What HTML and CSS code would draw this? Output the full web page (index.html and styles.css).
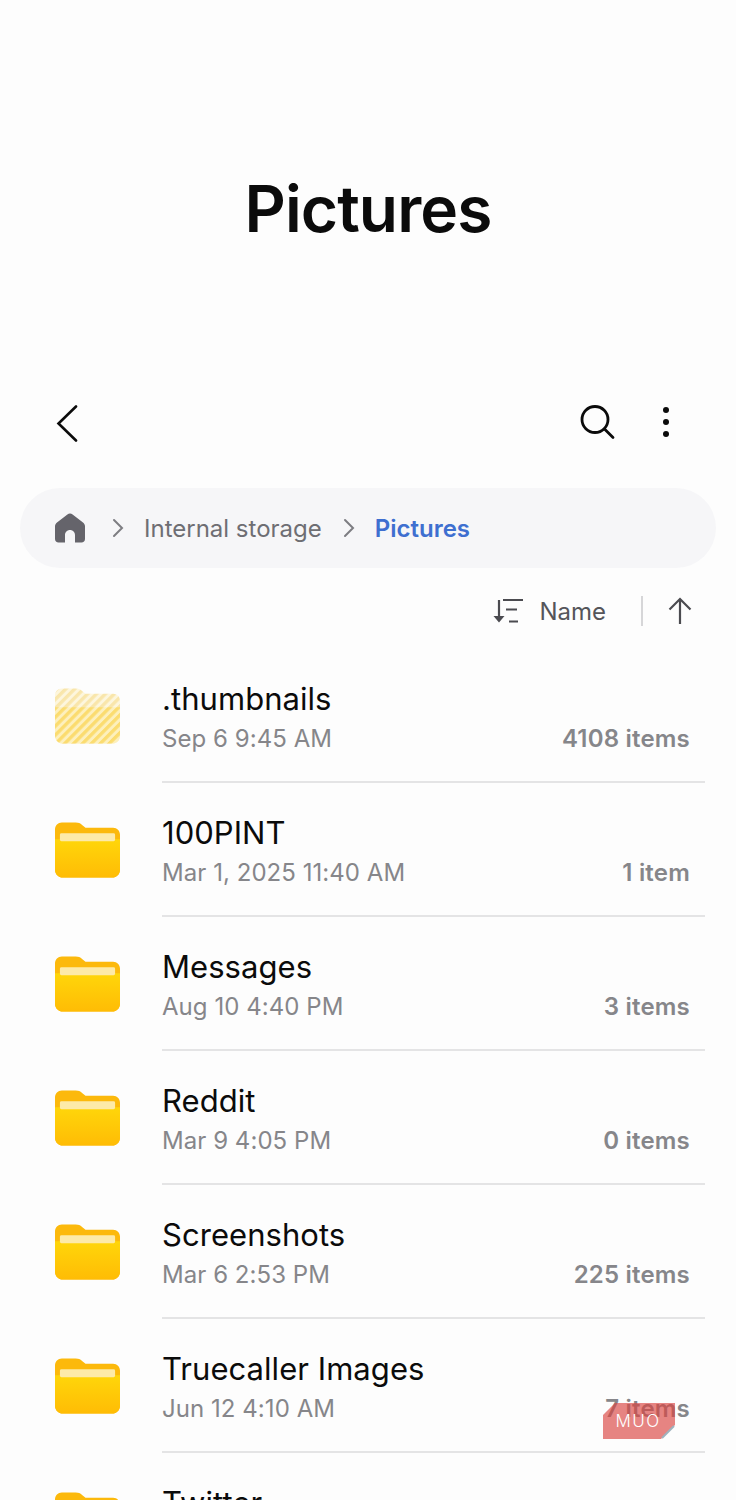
FILE: index.html
```html
<!doctype html>
<html lang="en">
  <head>
    <meta charset="utf-8">
    <title>Pictures</title>
    <meta name="viewport" content="width=device-width, initial-scale=1.0">
    <link rel="stylesheet" href="styles.css">
  </head>
  <body>
    <svg class="defs" width="0" height="0" aria-hidden="true">
      <defs>
        <linearGradient id="folder-front" x1="0" y1="0" x2="0" y2="1">
          <stop offset="0" stop-color="#ffd60a"/>
          <stop offset="1" stop-color="#ffbc05"/>
        </linearGradient>
        <pattern id="stripes" width="6.400" height="6.400" patternUnits="userSpaceOnUse" patternTransform="rotate(45)">
          <rect width="6.400" height="6.400" fill="#fdf0bd"/>
          <rect width="3.400" height="6.400" fill="#fbdc70"/>
        </pattern>
        <pattern id="stripes-pale" width="6.400" height="6.400" patternUnits="userSpaceOnUse" patternTransform="rotate(45)">
          <rect width="6.400" height="6.400" fill="#fdf6dd"/>
          <rect width="3.400" height="6.400" fill="#f9e6ab"/>
        </pattern>
        <symbol id="folder" viewBox="0 0 66 56">
          <path d="M7 0h14c3 0 4.500 .8 6.500 2.500L31 5.500h28c4 0 7 3 7 7V48c0 4.500-3.500 8-8 8H8c-4.500 0-8-3.500-8-8V7c0-4 3-7 7-7z" fill="#fcb90c"/>
          <path d="M0 17h66v31c0 4.500-3.500 8-8 8H8c-4.500 0-8-3.500-8-8z" fill="url(#folder-front)"/>
          <rect x="5" y="11" width="56" height="8" rx="1.500" fill="#fdeaa8"/>
        </symbol>
        <symbol id="folder-hidden" viewBox="0 0 66 56">
          <path d="M7 0h14c3 0 4.500 .8 6.500 2.500L31 5.500h28c4 0 7 3 7 7V48c0 4.500-3.500 8-8 8H8c-4.500 0-8-3.500-8-8V7c0-4 3-7 7-7z" fill="url(#stripes-pale)"/>
          <path d="M0 19h66v29c0 4.500-3.500 8-8 8H8c-4.500 0-8-3.500-8-8z" fill="url(#stripes)"/>
        </symbol>
      </defs>
    </svg>

    <div class="page">
      <header class="title-area">
        <h1>Pictures</h1>
      </header>

      <nav class="toolbar">
        <svg class="icon-back" viewBox="0 0 24 38" width="24" height="38"><path d="M21 2.500 3.500 19.500 21 36.500" fill="none" stroke="#0b0b0b" stroke-width="2.600" stroke-linecap="round"/></svg>
        <div class="toolbar-actions">
          <svg viewBox="0 0 36 36" width="36" height="36"><circle cx="16" cy="15.500" r="13" fill="none" stroke="#0b0b0b" stroke-width="2.800"/><path d="m25.500 25 8.500 8.500" fill="none" stroke="#0b0b0b" stroke-width="2.800" stroke-linecap="round"/></svg>
          <div class="more-dots"><span></span><span></span><span></span></div>
        </div>
      </nav>

      <div class="breadcrumb">
        <svg class="icon-home" viewBox="0 0 30 30" width="30" height="30"><path d="M15 0.500c1 0 1.800.4 2.600 1L28 9.500c1.200 1 2 2.300 2 3.800V26c0 2-1.500 3.500-3.500 3.500H20V22c0-2.800-2.200-5-5-5s-5 2.200-5 5v7.500H3.500C1.500 29.500 0 28 0 26V13.300c0-1.500.8-2.800 2-3.800L12.400 1.500c.8-.6 1.600-1 2.600-1z" fill="#65646b"/></svg>
        <svg class="icon-crumb" viewBox="0 0 12 20" width="12" height="20"><path d="m2 2 8 8-8 8" fill="none" stroke="#7d7d82" stroke-width="2" stroke-linecap="round"/></svg>
        <span class="crumb">Internal storage</span>
        <svg class="icon-crumb" viewBox="0 0 12 20" width="12" height="20"><path d="m2 2 8 8-8 8" fill="none" stroke="#7d7d82" stroke-width="2" stroke-linecap="round"/></svg>
        <span class="crumb crumb-current">Pictures</span>
      </div>

      <div class="sort-bar">
        <svg viewBox="0 0 32 26" width="32" height="26"><path d="M7 2v21" fill="none" stroke="#4b4b50" stroke-width="2.200"/><path d="M1.500 18h11L7 24.500z" fill="#4b4b50"/><path d="M11 2h20M14 11.500h11M17 23.500h9" fill="none" stroke="#4b4b50" stroke-width="2.200"/></svg>
        <span class="sort-name">Name</span>
        <span class="sort-sep"></span>
        <svg viewBox="0 0 24 28" width="24" height="28"><path d="M12 27V2M1.500 12.500 12 2l10.500 10.500" fill="none" stroke="#4b4b50" stroke-width="2.200"/></svg>
      </div>

      <main class="file-list">
        <div class="file-row">
          <svg class="folder" width="65" height="56"><use href="#folder-hidden"/></svg>
          <div class="file-info">
            <div class="file-name">.thumbnails</div>
            <div class="file-meta"><span>Sep 6 9:45 AM</span><b>4108 items</b></div>
          </div>
        </div>
        <div class="file-row">
          <svg class="folder" width="65" height="56"><use href="#folder"/></svg>
          <div class="file-info">
            <div class="file-name">100PINT</div>
            <div class="file-meta"><span>Mar 1, 2025 11:40 AM</span><b>1 item</b></div>
          </div>
        </div>
        <div class="file-row">
          <svg class="folder" width="65" height="56"><use href="#folder"/></svg>
          <div class="file-info">
            <div class="file-name">Messages</div>
            <div class="file-meta"><span>Aug 10 4:40 PM</span><b>3 items</b></div>
          </div>
        </div>
        <div class="file-row">
          <svg class="folder" width="65" height="56"><use href="#folder"/></svg>
          <div class="file-info">
            <div class="file-name">Reddit</div>
            <div class="file-meta"><span>Mar 9 4:05 PM</span><b>0 items</b></div>
          </div>
        </div>
        <div class="file-row">
          <svg class="folder" width="65" height="56"><use href="#folder"/></svg>
          <div class="file-info">
            <div class="file-name">Screenshots</div>
            <div class="file-meta"><span>Mar 6 2:53 PM</span><b>225 items</b></div>
          </div>
        </div>
        <div class="file-row">
          <svg class="folder" width="65" height="56"><use href="#folder"/></svg>
          <div class="file-info">
            <div class="file-name">Truecaller Images</div>
            <div class="file-meta"><span>Jun 12 4:10 AM</span><b>7 items</b></div>
          </div>
        </div>
        <div class="file-row">
          <svg class="folder" width="65" height="56"><use href="#folder"/></svg>
          <div class="file-info">
            <div class="file-name">Twitter</div>
          </div>
        </div>
      </main>

      <div class="watermark">
        <span>MUO</span>
      </div>
      <svg class="watermark-corner" viewBox="0 0 14 14" width="14" height="14"><path d="M1 13 13 1" stroke="#9fb2bd" stroke-width="2"/></svg>
    </div>
  </body>
</html>
```

FILE: styles.css
```css
html,
body {
  margin: 0;
  background-color: #fdfdfd;
}

body {
  font-family: "Inter", "Roboto", sans-serif;
  color: #0b0b0b;
}

.defs {
  position: absolute;
}

.page {
  position: relative;
  width: 736px;
  height: 1500px;
  overflow: hidden;
}

.title-area {
  height: 400px;
  padding-top: 170px;
  box-sizing: border-box;
  text-align: center;
}

h1 {
  margin: 0;
  font-size: 64px;
  line-height: 78px;
  font-weight: 600;
  letter-spacing: -0.9px;
}

.toolbar {
  display: flex;
  align-items: center;
  justify-content: space-between;
  height: 46px;
  padding: 0 67px 0 55px;
}

.toolbar-actions {
  display: flex;
  align-items: center;
  gap: 48px;
  margin-top: -2px;
}

.more-dots {
  display: flex;
  flex-direction: column;
  gap: 6px;
}

.more-dots span {
  width: 6px;
  height: 6px;
  border-radius: 50%;
  background-color: #0b0b0b;
}

.breadcrumb {
  display: flex;
  align-items: center;
  height: 80px;
  margin: 42px 20px 0;
  padding-left: 35px;
  border-radius: 40px;
  background-color: #f6f6f8;
  font-size: 24px;
}

.icon-home {
  margin-right: 27px;
}

.crumb {
  margin: 0 21px 0 20px;
  color: #6e6e73;
}

.crumb-current {
  font-weight: 600;
  color: #3e6fd0;
}

.sort-bar {
  display: flex;
  align-items: center;
  justify-content: flex-end;
  height: 30px;
  margin-top: 28px;
  padding-right: 44px;
  color: #55555a;
  font-size: 24px;
}

.sort-name {
  margin-left: 15px;
  margin-right: -1px;
}

.sort-sep {
  width: 2px;
  height: 30px;
  margin: 0 25px 0 36px;
  background-color: #d6d6d8;
}

.file-list {
  margin-top: 23px;
}

.file-row {
  display: flex;
  height: 134px;
  padding-left: 55px;
  box-sizing: border-box;
}

.folder {
  flex: none;
  margin: 39px 42px 0 0;
}

.file-info {
  flex: 1;
  margin-right: 31px;
  padding-top: 31px;
  border-bottom: 2px solid #e4e4e5;
  box-sizing: border-box;
}

.file-name {
  font-size: 31px;
  line-height: 38px;
  letter-spacing: 0.05px;
}

.file-meta {
  display: flex;
  justify-content: space-between;
  margin-top: 3px;
  padding-right: 15px;
  font-size: 24px;
  line-height: 36px;
  letter-spacing: 0.05px;
  color: #86868a;
}

.file-meta b {
  font-weight: 600;
  letter-spacing: 0.2px;
}

.watermark {
  position: absolute;
  left: 603px;
  top: 1403px;
  display: flex;
  align-items: center;
  justify-content: center;
  width: 72px;
  height: 36px;
  padding-right: 2px;
  box-sizing: border-box;
  background-color: rgba(218, 68, 64, 0.65);
  clip-path: polygon(12px 0, 100% 0, 100% 22px, 58px 100%, 0 100%, 0 12px);
  color: #fff;
  font-size: 17px;
  font-weight: 300;
  letter-spacing: 1.5px;
}

.watermark-corner {
  position: absolute;
  left: 661px;
  top: 1425px;
}
```
